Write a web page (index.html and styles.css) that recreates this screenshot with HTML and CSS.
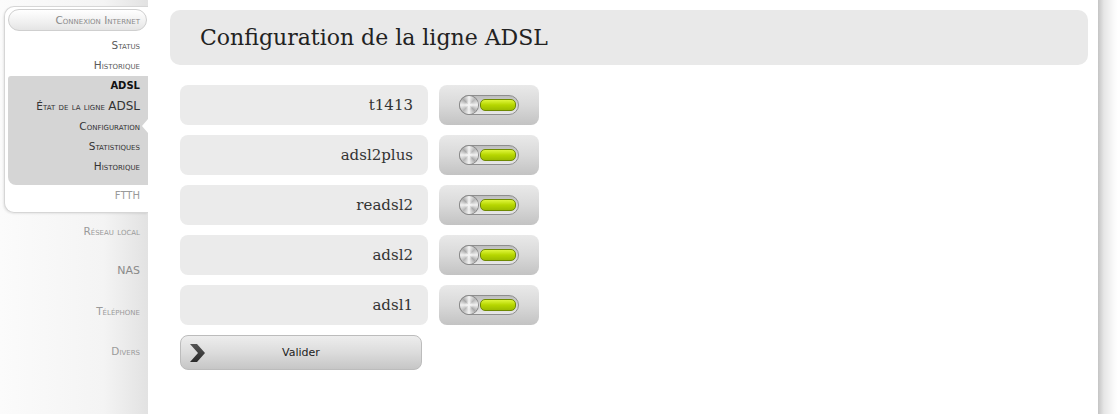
FILE: index.html
```html
<!DOCTYPE html>
<html lang="fr">
<head>
    <meta charset="UTF-8">
    <title>Configuration de la ligne ADSL</title>
    <link rel="stylesheet" href="styles.css">
</head>
<body>

<div class="page">
    <div class="sidebar">
        <div class="panel">
            <div class="panel-head">Connexion Internet</div>
            <div class="item">Status</div>
            <div class="item">Historique</div>
            <div class="group">
                <div class="item group-title">ADSL</div>
                <div class="item">État de la ligne <span class="caps">ADSL</span></div>
                <div class="item current">Configuration</div>
                <div class="item">Statistiques</div>
                <div class="item">Historique</div>
            </div>
            <div class="item top">FTTH</div>
        </div>
        <div class="outer-list">
            <div class="item outer">Réseau local</div>
            <div class="item outer plain">NAS</div>
            <div class="item outer">Téléphone</div>
            <div class="item outer">Divers</div>
        </div>
    </div>

    <div class="main">
        <div class="title-box">
            <h1>Configuration de la ligne ADSL</h1>
        </div>

        <!-- modes -->
        <div class="rows">
            <div class="row">
                <div class="label">t1413</div>
                <div class="switch-box"><span class="switch"><span class="knob"></span><span class="bar"></span></span></div>
            </div>
            <div class="row">
                <div class="label">adsl2plus</div>
                <div class="switch-box"><span class="switch"><span class="knob"></span><span class="bar"></span></span></div>
            </div>
            <div class="row">
                <div class="label">readsl2</div>
                <div class="switch-box"><span class="switch"><span class="knob"></span><span class="bar"></span></span></div>
            </div>
            <div class="row">
                <div class="label">adsl2</div>
                <div class="switch-box"><span class="switch"><span class="knob"></span><span class="bar"></span></span></div>
            </div>
            <div class="row">
                <div class="label">adsl1</div>
                <div class="switch-box"><span class="switch"><span class="knob"></span><span class="bar"></span></span></div>
            </div>
        </div>

        <button class="submit">
            <svg class="chevron" width="16" height="18" viewBox="0 0 16 18">
                <defs>
                    <linearGradient id="chev" x1="0" y1="0" x2="0" y2="1">
                        <stop offset="0" stop-color="#555"/>
                        <stop offset="1" stop-color="#2a2a2a"/>
                    </linearGradient>
                </defs>
                <polygon points="0,0 7,0 15,9 7,18 0,18 8,9" fill="url(#chev)"/>
            </svg>
            <span>Valider</span>
        </button>
    </div>

    <div class="edge"></div>
</div>

</body>
</html>
```
FILE: styles.css
```css
body {
    margin: 0;
    background-color: #ffffff;
    font-family: "DejaVu Sans", Verdana, sans-serif;
}
.page {
    display: flex;
    height: 414px;
    overflow: hidden;
}
.sidebar {
    width: 148px;
    flex-shrink: 0;
    background: linear-gradient(to right, #fbfbfb, #f4f4f4 70%, #e2e2e2);
    padding-top: 6px;
}
.panel {
    margin-left: 4px;
    background-color: #ffffff;
    border: 1px solid #d6d6d6;
    border-right: none;
    border-radius: 10px 0 0 10px;
    padding: 2px 0 6px 3px;
    box-shadow: -1px 1px 2px rgba(0, 0, 0, 0.08);
}
.panel-head {
    height: 20px;
    line-height: 20px;
    border: 1px solid #cfcfcf;
    border-radius: 11px;
    background: linear-gradient(#ffffff, #f0f0f0 60%, #e4e4e4);
    text-align: right;
    padding-right: 6px;
    margin-right: 1px;
    font-size: 10.5px;
    font-variant: small-caps;
    color: #8a8a8a;
    margin-bottom: 4px;
}
.item {
    height: 20px;
    line-height: 20px;
    text-align: right;
    padding-right: 8px;
    font-size: 10.5px;
    font-variant: small-caps;
    color: #5a5a5a;
    white-space: nowrap;
}
.caps {
    font-variant: normal;
    font-size: 12px;
}
.group {
    background-color: #d5d5d5;
    border-radius: 3px 0 0 8px;
    margin: 1px -3px 0 0;
    padding: 0 3px 9px 0;
}
.group .item {
    color: #333333;
}
.group .group-title {
    font-variant: normal;
    font-weight: bold;
    font-size: 10px;
    color: #111111;
}
.current {
    position: relative;
}
.current::after {
    content: "";
    position: absolute;
    right: 0;
    top: 3px;
    border-top: 7px solid transparent;
    border-bottom: 7px solid transparent;
    border-right: 6px solid #ffffff;
}
.top {
    font-variant: normal;
    font-size: 10px;
    color: #9a9a9a;
    margin-top: 1px;
}
.outer-list {
    margin-top: -2px;
}
.outer {
    height: 40px;
    line-height: 40px;
    color: #9a9a9a;
}
.plain {
    font-variant: normal;
    font-size: 11px;
    color: #8a8a8a;
}
.main {
    flex: 1;
    background-color: #ffffff;
    padding: 10px 10px 0 22px;
}
.title-box {
    background-color: #e9e9e9;
    border-radius: 10px;
    height: 55px;
    padding-left: 30px;
    display: flex;
    align-items: center;
}
h1 {
    margin: 0;
    font-family: "DejaVu Serif", Georgia, serif;
    font-weight: normal;
    font-size: 22px;
    color: #222222;
}
.rows {
    margin-top: 20px;
    margin-left: 10px;
    display: flex;
    flex-direction: column;
    gap: 10px;
}
.row {
    display: flex;
    gap: 11px;
}
.label {
    width: 233px;
    height: 40px;
    line-height: 40px;
    padding-right: 15px;
    border-radius: 8px;
    background-color: #ebebeb;
    text-align: right;
    font-family: "DejaVu Serif", Georgia, serif;
    font-size: 15px;
    color: #333333;
}
.switch-box {
    width: 100px;
    height: 40px;
    border-radius: 8px;
    background: linear-gradient(#e9e9e9, #d9d9d9 50%, #c3c3c3);
    display: flex;
    align-items: center;
    justify-content: center;
}
.switch {
    display: flex;
    align-items: center;
    width: 58px;
    height: 18px;
    border: 1px solid #8e8e8e;
    border-radius: 10px;
    background: linear-gradient(#bdbdbd, #e8e8e8);
}
.knob {
    width: 18px;
    height: 18px;
    border-radius: 50%;
    background:
        radial-gradient(circle, #ffffff 0, rgba(255, 255, 255, 0) 35%),
        conic-gradient(#f4f4f4, #b8b8b8, #f2f2f2, #a9a9a9, #f4f4f4, #b8b8b8, #f2f2f2, #a9a9a9, #f4f4f4);
    box-shadow: 0 0 0 1px #8a8a8a;
}
.bar {
    margin-left: 2px;
    width: 34px;
    height: 10px;
    border-radius: 5px;
    border: 1px solid #6f8a00;
    background: linear-gradient(#e0f63a, #b6d600 50%, #9cbc00);
}
.submit {
    margin: 10px 0 0 10px;
    width: 242px;
    height: 35px;
    border: 1px solid #bcbcbc;
    border-radius: 8px;
    background: linear-gradient(#ededed, #dcdcdc 50%, #c6c6c6);
    position: relative;
    padding: 0;
    font-family: "DejaVu Sans", Verdana, sans-serif;
    font-size: 11px;
    color: #222222;
    cursor: pointer;
}
.chevron {
    position: absolute;
    left: 9px;
    top: 8px;
}
.edge {
    width: 20px;
    flex-shrink: 0;
    background: linear-gradient(to right, #c4c4c4, #e6e6e6 30%, #fafafa 80%, #ffffff);
}
```
